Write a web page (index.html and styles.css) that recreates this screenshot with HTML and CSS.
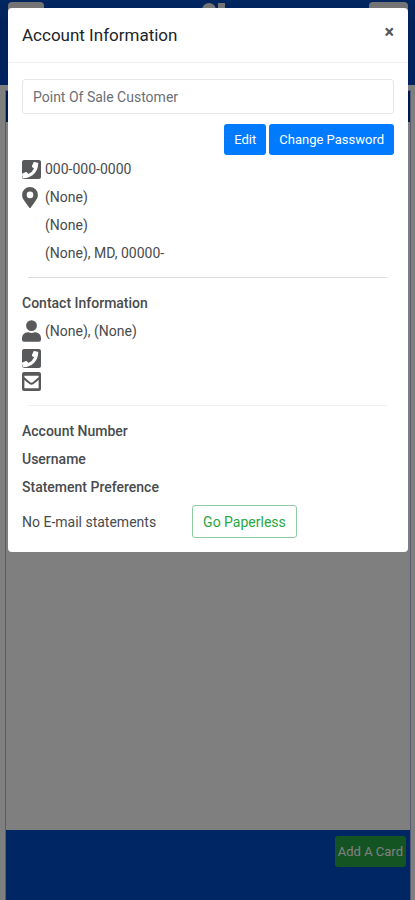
FILE: index.html
```html
<!DOCTYPE html>
<html lang="en">
<head>
<meta charset="utf-8">
<meta name="viewport" content="width=device-width, initial-scale=1">
<title>Account Information</title>
<link rel="stylesheet" href="styles.css">
</head>
<body>
<svg class="sprite" aria-hidden="true">
  <symbol id="phone" viewBox="0 0 448 448"><path fill-rule="evenodd" d="M48 0h352a48 48 0 0 1 48 48v352a48 48 0 0 1-48 48H48a48 48 0 0 1-48-48V48A48 48 0 0 1 48 0zM369 65l-78-18a18 18 0 0 0-21 11l-36 84a18 18 0 0 0 5 21l45 37a278 278 0 0 1-133 133l-37-45a18 18 0 0 0-21-5l-84 36a18 18 0 0 0-10 21l18 78a18 18 0 0 0 18 14c193 0 348-156 348-348a18 18 0 0 0-14-19z"/></symbol>
  <symbol id="pin" viewBox="0 0 384 512"><path d="M172 502C27 291 0 270 0 192a192 192 0 0 1 384 0c0 78-27 99-172 310a24 24 0 0 1-40 0zM192 272a80 80 0 1 0 0-160 80 80 0 0 0 0 160z"/></symbol>
  <symbol id="user" viewBox="0 0 448 512"><path d="M224 256a128 128 0 1 0 0-256 128 128 0 0 0 0 256zm90 32h-17a174 174 0 0 1-146 0h-17A134 134 0 0 0 0 422v42a48 48 0 0 0 48 48h352a48 48 0 0 0 48-48v-42a134 134 0 0 0-134-134z"/></symbol>
  <symbol id="mail" viewBox="0 0 448 448"><path fill-rule="evenodd" d="M48 0h352a48 48 0 0 1 48 48v352a48 48 0 0 1-48 48H48a48 48 0 0 1-48-48V48A48 48 0 0 1 48 0zM56 88v38c20 17 46 38 112 90 14 11 40 36 56 36s42-25 56-36c66-52 92-73 112-90V88zM56 188v196h336V188c-20 16-46 36-82 65-17 13-48 47-86 47s-69-34-86-47c-36-29-62-49-82-65z"/></symbol>
</svg>
<div class="page">
  <header class="site-header">
    <span class="site-tab"></span>
    <svg class="site-logo" viewBox="0 0 40 8" aria-hidden="true"><path d="M15 8a7 7 0 0 1 14 0zM31 1h7v7h-7z"/></svg>
    <span class="site-tab"></span>
  </header>
  <main class="panel">
    <div class="panel-title"></div>
    <div class="panel-body"></div>
    <footer class="panel-footer"><button type="button" class="add-card">Add A Card</button></footer>
  </main>
</div>
<div class="backdrop">
  <section class="modal" role="dialog" aria-labelledby="title">
    <header class="modal-header">
      <h1 id="title">Account Information</h1>
      <button type="button" class="close" aria-label="Close">×</button>
    </header>
    <div class="modal-body">
      <input class="name" type="text" aria-label="Account name" value="Point Of Sale Customer">
      <div class="actions">
        <button type="button" class="btn primary">Edit</button>
        <button type="button" class="btn primary">Change Password</button>
      </div>
      <div class="row"><svg class="icon"><use href="#phone"/></svg><span>000-000-0000</span></div>
      <div class="row"><svg class="icon pin"><use href="#pin"/></svg><span>(None)</span></div>
      <div class="row indent">(None)</div>
      <div class="row indent">(None), MD, 00000-</div>
      <hr>
      <h2>Contact Information</h2>
      <div class="row"><svg class="icon tall"><use href="#user"/></svg><span>(None), (None)</span></div>
      <div class="contacts">
        <svg class="icon"><use href="#phone"/></svg>
        <svg class="icon"><use href="#mail"/></svg>
      </div>
      <hr class="light">
      <h2>Account Number</h2>
      <h2>Username</h2>
      <h2>Statement Preference</h2>
      <div class="statement"><span>No E-mail statements</span><button type="button" class="btn outline">Go Paperless</button></div>
    </div>
  </section>
</div>
</body>
</html>
```
FILE: styles.css
```css
* { box-sizing: border-box; }
body {
  margin: 0;
  font-family: Roboto, "Liberation Sans", sans-serif;
  font-size: 14px;
  line-height: 20px;
  color: #484b4e;
}
button, input { font: inherit; }
.sprite { display: none; }

.page {
  min-height: 100vh;
  display: flex;
  flex-direction: column;
  background: #fff;
}
.site-header {
  height: 85px;
  padding: 2px 7px 0 8px;
  display: flex;
  justify-content: space-between;
  align-items: flex-start;
  background: linear-gradient(#004cc0, #0044b4 30%, #0048c0);
}
.site-tab {
  width: 36px;
  height: 32px;
  border-radius: 4px;
  background: #e8e8e8;
}
.site-tab:last-child { width: 39px; }
.site-logo { width: 40px; height: 8px; fill: #e8e8e8; }
.panel {
  flex: 1;
  margin: 5px 4px 0 5px;
  display: flex;
  flex-direction: column;
  border: 1px solid #b0b8e8;
  border-bottom: 0;
}
.panel-title { height: 31px; background: #0030a0; }
.panel-body { flex: 1; }
.panel-footer {
  height: 70px;
  padding: 6px 4px;
  display: flex;
  justify-content: flex-end;
  align-items: flex-start;
  background: #004cc6;
}
.add-card {
  height: 31px;
  padding: 0 3px;
  border: 0;
  border-radius: 3px;
  background: #28a745;
  color: #fff;
  font-size: 13px;
}

.backdrop {
  position: absolute;
  inset: 0;
  padding: 8px 7px 8px 8px;
  background: rgba(0, 0, 0, .5);
}
.modal { background: #fff; border-radius: 4px; }
.modal-header {
  height: 55px;
  padding: 0 14px;
  display: flex;
  justify-content: space-between;
  align-items: center;
  border-bottom: 1px solid #eceef0;
}
h1 { margin: 0; font-size: 17px; font-weight: 400; color: #212529; }
.close {
  padding: 0 0 6px;
  border: 0;
  background: none;
  color: #555;
  font-size: 18px;
  font-weight: 700;
}
.modal-body { padding: 16px 14px 14px; }
.name {
  display: block;
  width: 100%;
  height: 35px;
  padding: 0 10px;
  border: 1px solid #e6e8ea;
  border-radius: 3px;
  background: #fff;
  color: #6a7076;
}
.actions {
  display: flex;
  justify-content: flex-end;
  gap: 3px;
  margin: 10px 0 0;
}
.btn {
  height: 31px;
  padding: 0 10px;
  border: 0;
  border-radius: 3px;
}
.primary { background: #007bff; color: #fff; font-size: 13px; }
.row {
  height: 28px;
  display: flex;
  align-items: center;
  gap: 4px;
}
.indent { padding-left: 23px; }
.icon { width: 19px; height: 19px; fill: #58595b; }
.tall { height: 22px; }
.pin { height: 21px; padding-right: 3px; }
.contacts {
  display: flex;
  flex-direction: column;
  gap: 4px;
  padding: 4px 0;
}
hr { margin: 10px 7px 11px 6px; border: 0; border-top: 1px solid #dadcde; }
.light { border-color: #eceef0; }
h2 {
  margin: 0;
  font-size: 14px;
  line-height: 28px;
  font-weight: 500;
}
.statement { display: flex; align-items: center; gap: 36px; padding-top: 4px; }
.outline {
  height: 33px;
  border: 1px solid #8fcba0;
  background: #fff;
  color: #28a745;
}
```
